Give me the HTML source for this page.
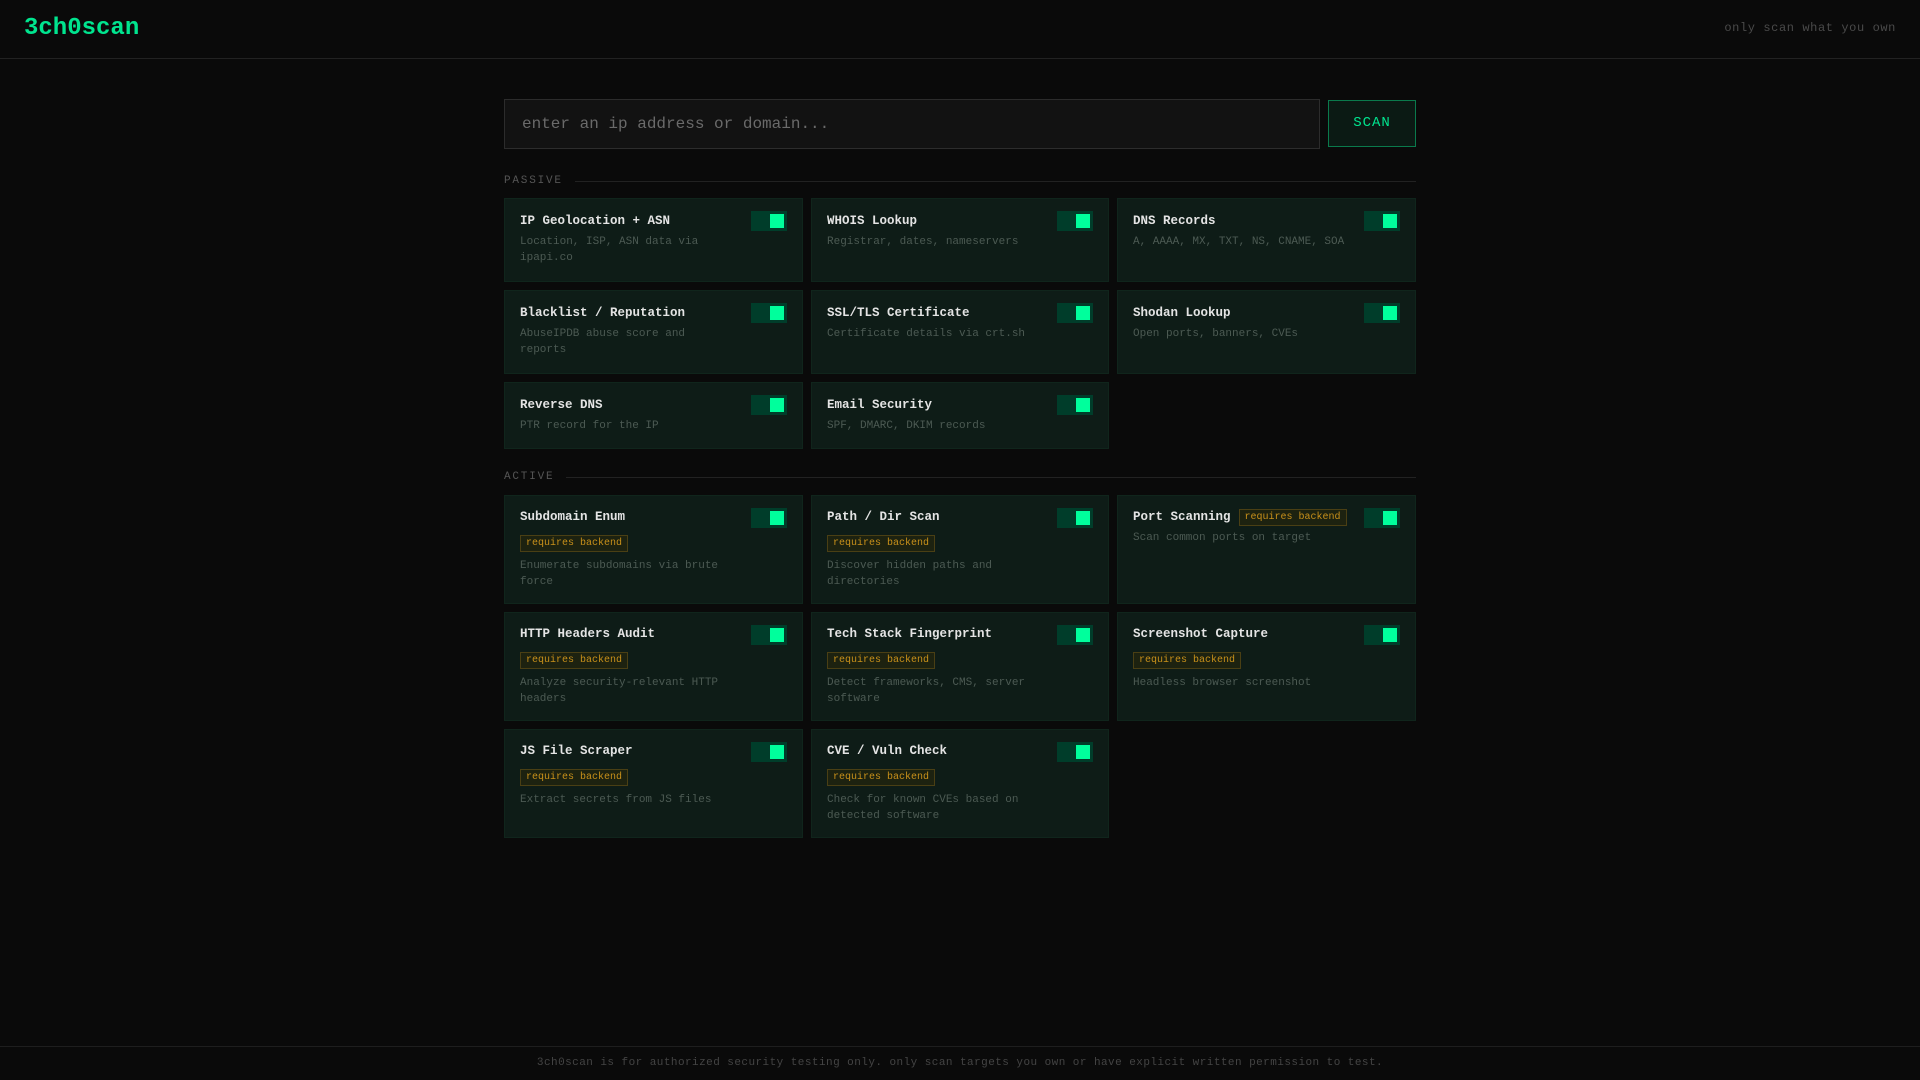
<!DOCTYPE html>
<html><head><meta charset="utf-8"><style>
*{box-sizing:border-box;margin:0;padding:0}
body{width:1920px;height:1080px;background:#0a0a0a;font-family:"Liberation Mono",monospace;position:relative;overflow:hidden}
.hdr{height:59px;border-bottom:1px solid #222;position:relative}
.logo{position:absolute;left:24px;top:14px;font-size:24px;font-weight:bold;color:#00e58f;line-height:30px}
.tag{position:absolute;right:24px;top:20px;font-size:12px;letter-spacing:.6px;color:#4a4a4a;line-height:16px}
.wrap{position:absolute;left:504px;width:912px;top:99px}
.search{display:flex;gap:8px;height:50px}
.inp{flex:1;border:1px solid #2c2c2c;background:#121212;color:#6a6a6a;font-size:16px;padding-left:17px;line-height:48px}
.btn{width:88px;height:47px;margin-top:1px;border:1px solid #0a7a4c;background:#0b1a14;color:#00e58f;font-size:14px;letter-spacing:1px;text-align:center;line-height:45px}
.lbl{display:flex;align-items:center;font-size:11px;letter-spacing:1.8px;color:#555;height:16px}
.lbl:after{content:"";flex:1;height:1px;background:#222;margin-left:12px}
.grid{display:grid;grid-template-columns:299px 298px 299px;gap:8px}
.card{background:#0e1c17;border:1px solid #10251c;padding:12px 15px 15px;position:relative}
.row{height:20px;display:flex;align-items:center;gap:8px}
.t{font-size:12.5px;font-weight:bold;color:#e4e4e4}
.tg{position:absolute;right:15px;top:12px;width:36px;height:20px;background:#003d2a}
.tg:after{content:"";position:absolute;right:3px;top:3px;width:14px;height:14px;background:#00ff9c}
.d{font-size:11px;line-height:16px;color:#4c5a53;max-width:215px;margin-top:3px}
.b{display:inline-block;font-size:10px;color:#c8901a;background:#1d2210;border:1px solid #4a3f14;padding:0 5px;line-height:15px;margin-top:8px}
.a .card{padding-top:11px;padding-bottom:13px}
.a .d{margin-top:6px}
.foot{position:absolute;left:0;right:0;top:1046px;bottom:0;border-top:1px solid #1e1e1e;text-align:center;font-size:11px;letter-spacing:.45px;color:#444;line-height:32px}
</style></head><body>
<div class="hdr"><div class="logo">3ch0scan</div><div class="tag">only scan what you own</div></div>
<div class="wrap">
<div class="search"><div class="inp">enter an ip address or domain...</div><div class="btn">SCAN</div></div>
<div class="lbl" style="margin-top:24px">PASSIVE</div>
<div class="grid" style="margin-top:9px">
<div class="card"><div class="row"><span class="t">IP Geolocation + ASN</span></div><div class="tg"></div><div class="d">Location, ISP, ASN data via ipapi.co</div></div>
<div class="card"><div class="row"><span class="t">WHOIS Lookup</span></div><div class="tg"></div><div class="d">Registrar, dates, nameservers</div></div>
<div class="card"><div class="row"><span class="t">DNS Records</span></div><div class="tg"></div><div class="d" style="max-width:240px">A, AAAA, MX, TXT, NS, CNAME, SOA</div></div>
<div class="card"><div class="row"><span class="t">Blacklist / Reputation</span></div><div class="tg"></div><div class="d">AbuseIPDB abuse score and reports</div></div>
<div class="card"><div class="row"><span class="t">SSL/TLS Certificate</span></div><div class="tg"></div><div class="d" style="max-width:240px">Certificate details via crt.sh</div></div>
<div class="card"><div class="row"><span class="t">Shodan Lookup</span></div><div class="tg"></div><div class="d">Open ports, banners, CVEs</div></div>
<div class="card" style="padding-bottom:14px"><div class="row"><span class="t">Reverse DNS</span></div><div class="tg"></div><div class="d">PTR record for the IP</div></div>
<div class="card" style="padding-bottom:14px"><div class="row"><span class="t">Email Security</span></div><div class="tg"></div><div class="d">SPF, DMARC, DKIM records</div></div>
</div>
<div class="lbl" style="margin-top:20px">ACTIVE</div>
<div class="grid a" style="margin-top:10px">
<div class="card"><div class="row"><span class="t">Subdomain Enum</span></div><div class="tg"></div><div class="b">requires backend</div><div class="d">Enumerate subdomains via brute force</div></div>
<div class="card"><div class="row"><span class="t">Path / Dir Scan</span></div><div class="tg"></div><div class="b">requires backend</div><div class="d">Discover hidden paths and directories</div></div>
<div class="card"><div class="row"><span class="t">Port Scanning</span><span class="b" style="margin-top:0">requires backend</span></div><div class="tg"></div><div class="d" style="max-width:240px;margin-top:3px">Scan common ports on target</div></div>
<div class="card"><div class="row"><span class="t">HTTP Headers Audit</span></div><div class="tg"></div><div class="b">requires backend</div><div class="d">Analyze security-relevant HTTP headers</div></div>
<div class="card"><div class="row"><span class="t">Tech Stack Fingerprint</span></div><div class="tg"></div><div class="b">requires backend</div><div class="d">Detect frameworks, CMS, server software</div></div>
<div class="card"><div class="row"><span class="t">Screenshot Capture</span></div><div class="tg"></div><div class="b">requires backend</div><div class="d">Headless browser screenshot</div></div>
<div class="card"><div class="row"><span class="t">JS File Scraper</span></div><div class="tg"></div><div class="b">requires backend</div><div class="d">Extract secrets from JS files</div></div>
<div class="card"><div class="row"><span class="t">CVE / Vuln Check</span></div><div class="tg"></div><div class="b">requires backend</div><div class="d">Check for known CVEs based on detected software</div></div>
</div>
</div>
<div class="foot">3ch0scan is for authorized security testing only. only scan targets you own or have explicit written permission to test.</div>
</body></html>
